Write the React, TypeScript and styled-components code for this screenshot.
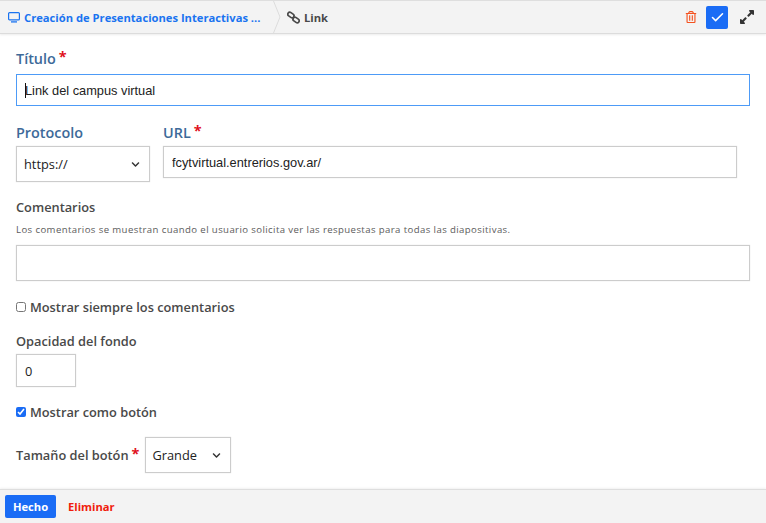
import React from "react";
import styled, { createGlobalStyle } from "styled-components";
import { FaRegTrashAlt, FaExpandAlt, FaChevronDown } from "react-icons/fa";
import { FiCheck } from "react-icons/fi";

const GlobalStyle = createGlobalStyle`
  html, body {
    margin: 0;
    padding: 0;
    height: 100%;
    background: #fff;
    overflow: hidden;
  }
  body {
    font-family: "Open Sans", "Noto Sans", sans-serif;
    color: #494949;
  }
`;

const Page = styled.div`
  width: 766px;
  height: 523px;
  display: flex;
  flex-direction: column;
`;

const Toolbar = styled.div`
  height: 32px;
  flex: none;
  display: flex;
  align-items: center;
  background: #f3f3f3;
  border-top: 1px solid #dedede;
  border-bottom: 1px solid #dcdcdc;
  box-shadow: 0 1px 2px rgba(0, 0, 0, 0.08);
  box-sizing: content-box;
`;

const Crumb = styled.div<{ $active?: boolean }>`
  display: flex;
  align-items: center;
  gap: 4px;
  font-size: 11.2px;
  font-weight: 700;
  color: ${({ $active }) => ($active ? "#494949" : "#1a73f0")};
`;

const CourseCrumb = styled(Crumb)`
  width: 273px;
  flex: none;
  padding-left: 8px;
  box-sizing: border-box;
`;

const Separator = styled.svg`
  width: 8px;
  height: 32px;
  flex: none;
`;

const LinkCrumb = styled(Crumb)`
  margin-left: 6px;
`;

const Actions = styled.div`
  margin-left: auto;
  display: flex;
  align-items: center;
  padding-right: 11px;
`;

const TrashButton = styled.span`
  display: flex;
  color: #f4511e;
  font-size: 12px;
  margin-right: 9px;
`;

const ConfirmButton = styled.span`
  width: 22px;
  height: 23px;
  display: flex;
  align-items: center;
  justify-content: center;
  background: #1a6cf5;
  color: #fff;
  border-radius: 2px;
  font-size: 15px;
  margin-right: 11px;
`;

const ExpandButton = styled.span`
  display: flex;
  color: #333;
  font-size: 16px;
`;

const Form = styled.div`
  flex: 1;
  padding: 15px 16px 0;
  min-height: 0;
`;

const BlueLabel = styled.label`
  display: block;
  color: #3d6a99;
  font-size: 14.4px;
  font-weight: 600;
  line-height: 20px;
`;

const Required = styled.span`
  color: #e0101c;
  font-size: 14.4px;
  font-weight: 700;
  line-height: 0;
  margin-left: 3px;
  position: relative;
  top: -2px;
`;

const TextInput = styled.input<{ $focus?: boolean; $width?: string }>`
  display: block;
  box-sizing: border-box;
  width: ${({ $width }) => $width || "100%"};
  height: 32px;
  padding: 0 8px;
  border: 1px solid ${({ $focus }) => ($focus ? "#4d9bf7" : "#cccccc")};
  box-shadow: ${({ $focus }) => ($focus ? "none" : "0 0 1px #dddddd")};
  outline: none;
  font-family: "Liberation Sans", Arial, sans-serif;
  font-size: 12.8px;
  color: #222;
  background: #fff;
  border-radius: 0;
`;

const TitleGroup = styled.div`
  display: flex;
  flex-direction: column;
  gap: 5px;
`;

const TitleField = styled.div`
  position: relative;
`;

const Caret = styled.span`
  position: absolute;
  left: 9px;
  top: 9px;
  width: 1px;
  height: 15px;
  background: #111;
`;

const UrlRow = styled.div`
  display: flex;
  gap: 13px;
  margin-top: 17px;
`;

const ProtocolColumn = styled.div`
  width: 134px;
  flex: none;
  display: flex;
  flex-direction: column;
  gap: 3px;
`;

const UrlColumn = styled.div`
  width: 574px;
  display: flex;
  flex-direction: column;
  gap: 3px;
`;

const FakeSelect = styled.div<{ $width: number }>`
  box-sizing: border-box;
  width: ${({ $width }) => $width}px;
  height: 36px;
  display: flex;
  align-items: center;
  justify-content: space-between;
  padding: 0 9px 0 7px;
  border: 1px solid #cccccc;
  box-shadow: 0 0 1px #dddddd;
  font-size: 12.8px;
  color: #222;
  background: #fff;
  svg {
    font-size: 9px;
    color: #333;
  }
`;

const SizeSelect = styled(FakeSelect)`
  padding-left: 6px;
`;

const DarkLabel = styled.div`
  font-size: 12.8px;
  font-weight: 600;
  line-height: 18px;
  color: #494949;
`;

const CommentsGroup = styled.div`
  margin-top: 16px;
`;

const Hint = styled.div`
  font-size: 9.6px;
  line-height: 14px;
  margin-top: 7px;
  margin-bottom: 8px;
  letter-spacing: 0.4px;
  color: #5c5c5c;
`;

const CommentBox = styled(TextInput)`
  height: 36px;
`;

const CheckRow = styled.label<{ $top: number }>`
  display: flex;
  align-items: center;
  gap: 4px;
  margin-top: ${({ $top }) => $top}px;
  font-size: 12.8px;
  font-weight: 600;
  line-height: 18px;
  color: #494949;
`;

const Check = styled.input`
  width: 10px;
  height: 10px;
  margin: 0;
  accent-color: #1a6cf5;
`;

const OpacityGroup = styled.div`
  margin-top: 16px;
  display: flex;
  flex-direction: column;
  gap: 4px;
`;

const OpacityInput = styled(TextInput)`
  height: 33px;
  font-family: "Open Sans", sans-serif;
`;

const SizeRow = styled.div`
  display: flex;
  align-items: center;
  gap: 6px;
  margin-top: 16px;
`;

const SmallRequired = styled(Required)`
  top: -1px;
`;

const Footer = styled.div`
  height: 33px;
  flex: none;
  display: flex;
  align-items: center;
  background: #f3f3f3;
  border-top: 1px solid #dedede;
  box-shadow: 0 -1px 2px rgba(0, 0, 0, 0.06);
  padding-left: 5px;
  gap: 12px;
`;

const DoneButton = styled.button`
  width: 51px;
  height: 23px;
  border: 0;
  border-radius: 2px;
  background: #1a6cf5;
  color: #fff;
  font-family: inherit;
  font-size: 11.2px;
  font-weight: 700;
  padding: 0;
`;

const RemoveLink = styled.span`
  color: #f01c0c;
  font-size: 11.2px;
  font-weight: 700;
`;

const MonitorIcon = () => (
  <svg width="12" height="12" viewBox="0 0 12 12" fill="none" stroke="currentColor">
    <rect x="0.6" y="1.6" width="10.8" height="7.3" rx="1" strokeWidth="1.2" />
    <path d="M3 10.9 H9" strokeWidth="1.3" />
  </svg>
);

const ChainIcon = () => (
  <svg width="13" height="13" viewBox="0 0 13 13" fill="none" stroke="currentColor" strokeWidth="1.7">
    <rect x="0.6" y="2" width="6.6" height="4" rx="2" transform="rotate(35 3.9 4)" />
    <rect x="5.8" y="7" width="6.6" height="4" rx="2" transform="rotate(35 9.1 9)" />
  </svg>
);

export default function App() {
  return (
    <Page>
      <GlobalStyle />
      <Toolbar>
        <CourseCrumb>
          <MonitorIcon />
          <span>Creación de Presentaciones Interactivas ...</span>
        </CourseCrumb>
        <Separator viewBox="0 0 8 32">
          <path d="M0.5 0 L7 16 L0.5 32" fill="none" stroke="#dcdcdc" />
        </Separator>
        <LinkCrumb $active>
          <ChainIcon />
          <span>Link</span>
        </LinkCrumb>
        <Actions>
          <TrashButton>
            <FaRegTrashAlt />
          </TrashButton>
          <ConfirmButton>
            <FiCheck strokeWidth={2.5} />
          </ConfirmButton>
          <ExpandButton>
            <FaExpandAlt />
          </ExpandButton>
        </Actions>
      </Toolbar>
      <Form>
        <TitleGroup>
          <BlueLabel>
            Título<Required>*</Required>
          </BlueLabel>
          <TitleField>
            <TextInput $focus defaultValue="Link del campus virtual" />
            <Caret />
          </TitleField>
        </TitleGroup>
        <UrlRow>
          <ProtocolColumn>
            <BlueLabel>Protocolo</BlueLabel>
            <FakeSelect $width={134}>
              https://
              <FaChevronDown />
            </FakeSelect>
          </ProtocolColumn>
          <UrlColumn>
            <BlueLabel>
              URL<Required>*</Required>
            </BlueLabel>
            <TextInput defaultValue="fcytvirtual.entrerios.gov.ar/" />
          </UrlColumn>
        </UrlRow>
        <CommentsGroup>
          <DarkLabel>Comentarios</DarkLabel>
          <Hint>
            Los comentarios se muestran cuando el usuario solicita ver las respuestas para todas las
            diapositivas.
          </Hint>
          <CommentBox />
        </CommentsGroup>
        <CheckRow $top={17}>
          <Check type="checkbox" />
          Mostrar siempre los comentarios
        </CheckRow>
        <OpacityGroup>
          <DarkLabel>Opacidad del fondo</DarkLabel>
          <OpacityInput $width="60px" defaultValue="0" />
        </OpacityGroup>
        <CheckRow $top={16}>
          <Check type="checkbox" defaultChecked />
          Mostrar como botón
        </CheckRow>
        <SizeRow>
          <DarkLabel>
            Tamaño del botón<SmallRequired>*</SmallRequired>
          </DarkLabel>
          <SizeSelect $width={86}>
            Grande
            <FaChevronDown />
          </SizeSelect>
        </SizeRow>
      </Form>
      <Footer>
        <DoneButton>Hecho</DoneButton>
        <RemoveLink>Eliminar</RemoveLink>
      </Footer>
    </Page>
  );
}
